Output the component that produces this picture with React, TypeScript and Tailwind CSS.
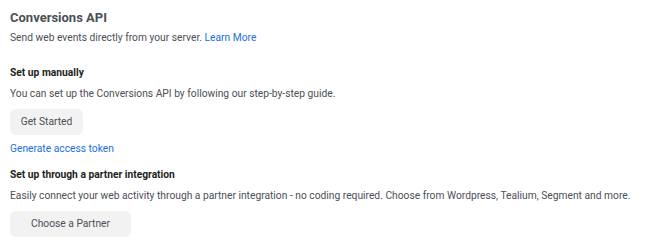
export default function App() {
  return (
    <div className="w-[649px] h-[244px] bg-white px-[10px] pt-[9px] font-['Roboto','Liberation_Sans',sans-serif] text-[#4b4f56]">
      <h1 className="text-[13px] leading-[17px] font-bold text-[#4b4f56]">Conversions API</h1>
      <p className="mt-[5px] text-[10.25px] leading-[14px]">
        Send web events directly from your server. <a className="text-[#216fdb]">Learn More</a>
      </p>

      <h2 className="mt-[21px] text-[10.25px] leading-[14px] font-bold text-[#1c1e21]">Set up manually</h2>
      <p className="mt-[7px] text-[10.25px] leading-[14px]">
        You can set up the Conversions API by following our step-by-step guide.
      </p>
      <button className="mt-[8px] h-[26px] w-[73px] rounded-[6px] bg-[#f2f2f2] text-[10.25px] text-[#4b4f56]">
        Get Started
      </button>
      <p className="mt-[7px] text-[10.25px] leading-[14px] text-[#216fdb]">Generate access token</p>

      <h2 className="mt-[12px] text-[10.25px] leading-[14px] font-bold text-[#1c1e21]">Set up through a partner integration</h2>
      <p className="mt-[7px] text-[10.25px] leading-[14px] whitespace-nowrap">
        Easily connect your web activity through a partner integration - no coding required. Choose from Wordpress, Tealium, Segment and more.
      </p>
      <button className="mt-[8px] h-[26px] w-[121px] rounded-[6px] bg-[#f2f2f2] text-[10.25px] text-[#4b4f56]">
        Choose a Partner
      </button>
    </div>
  );
}
